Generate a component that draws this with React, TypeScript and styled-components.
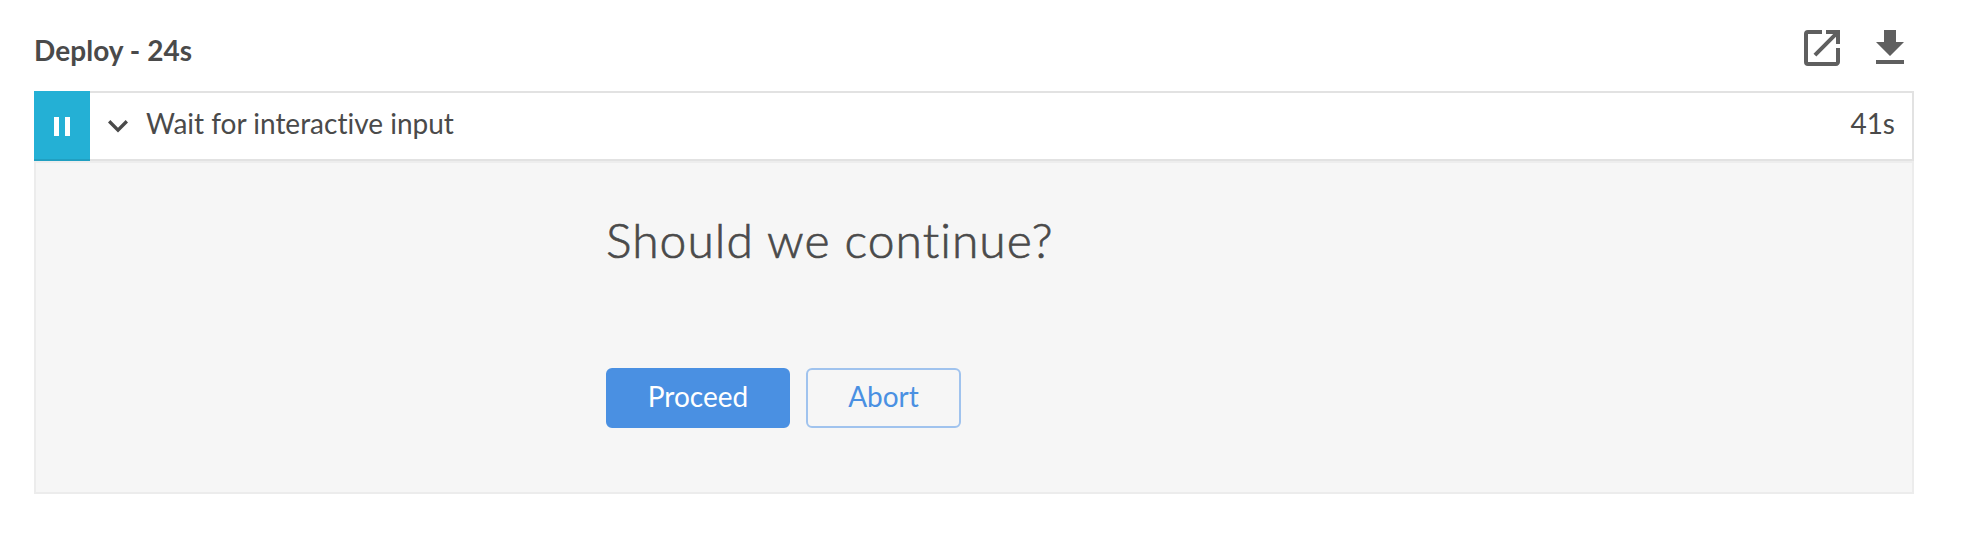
import React from 'react';
import styled, { createGlobalStyle } from 'styled-components';

const Global = createGlobalStyle`
  *{box-sizing:border-box}
  body{margin:0;background:#fff;color:#4a4a4a;font-family:Lato,sans-serif;font-variant-ligatures:none;-webkit-font-smoothing:antialiased}
`;
const Page = styled.main`padding:0 56px 0 34px;height:556px;`;
const Header = styled.header`height:91px;display:flex;justify-content:space-between;align-items:flex-start;`;
const Title = styled.h1`margin:33px 0 0;font-size:28px;line-height:34px;font-weight:700;letter-spacing:0.06px;`;
const Actions = styled.div`display:flex;gap:20px;margin-top:24px;`;
const Icon = styled.svg<{ $size: number }>`width:${p => p.$size}px;height:${p => p.$size}px;display:block;fill:#5f5f5f;`;
const Step = styled.div`height:70px;display:flex;align-items:center;border:2px solid #e2e2e2;border-left:0;background:#fff;font-size:28px;`;
const Status = styled.div`width:56px;height:70px;background:#24b0d5;border-bottom:2px solid #209fc1;padding-top:2px;display:flex;align-items:center;justify-content:center;`;
const Chevron = styled(Icon)`margin:2px 8px 0 8px;fill:#4a4a4a;`;
const Label = styled.span`flex:1;line-height:34px;padding-bottom:6px;`;
const Duration = styled.span`padding:0 17px 6px 0;line-height:34px;`;
const Body = styled.section`height:333px;background:#f6f6f6;border:2px solid #ececec;border-top-color:#ededed;padding:47px 0 0 570px;`;
const Question = styled.h2`margin:0;font-size:48px;line-height:60px;font-weight:300;letter-spacing:1.03px;-webkit-text-stroke:0.7px #4a4a4a;`;
const Buttons = styled.div`display:flex;gap:16px;margin-top:98px;`;
const Button = styled.button<{ $primary?: boolean }>`
  height:60px;width:${p => (p.$primary ? 184 : 155)}px;border-radius:6px;font:28px Lato,sans-serif;padding:0 0 4px;
  border:2px solid ${p => (p.$primary ? '#4a90e2' : '#a0c3ee')};
  background:${p => (p.$primary ? '#4a90e2' : 'transparent')};color:${p => (p.$primary ? '#fff' : '#4a90e2')};
`;

export default function App() {
  return (
    <Page>
      <Global />
      <Header>
        <Title>Deploy - 24s</Title>
        <Actions>
          <Icon $size={48} viewBox="0 0 24 24"><path d="M19 19H5V5h7V3H5a2 2 0 0 0-2 2v14a2 2 0 0 0 2 2h14c1.1 0 2-.9 2-2v-7h-2v7zM14 3v2h3.59l-9.83 9.83 1.41 1.41L19 6.41V10h2V3h-7z" /></Icon>
          <Icon $size={48} viewBox="0 0 24 24"><path d="M19 9h-4V3H9v6H5l7 7 7-7zM5 18v2h14v-2H5z" /></Icon>
        </Actions>
      </Header>
      <Step>
        <Status><Icon $size={32} viewBox="0 0 32 32"><path fill="#fff" d="M8 7h5v19H8zM19 7h5v19h-5z" /></Icon></Status>
        <Chevron $size={40} viewBox="0 0 24 24"><path d="M7.41 7.84L12 12.42l4.59-4.58L18 9.25l-6 6-6-6z" /></Chevron>
        <Label>Wait for interactive input</Label>
        <Duration>41s</Duration>
      </Step>
      <Body>
        <Question>Should we continue?</Question>
        <Buttons><Button $primary>Proceed</Button><Button>Abort</Button></Buttons>
      </Body>
    </Page>
  );
}
